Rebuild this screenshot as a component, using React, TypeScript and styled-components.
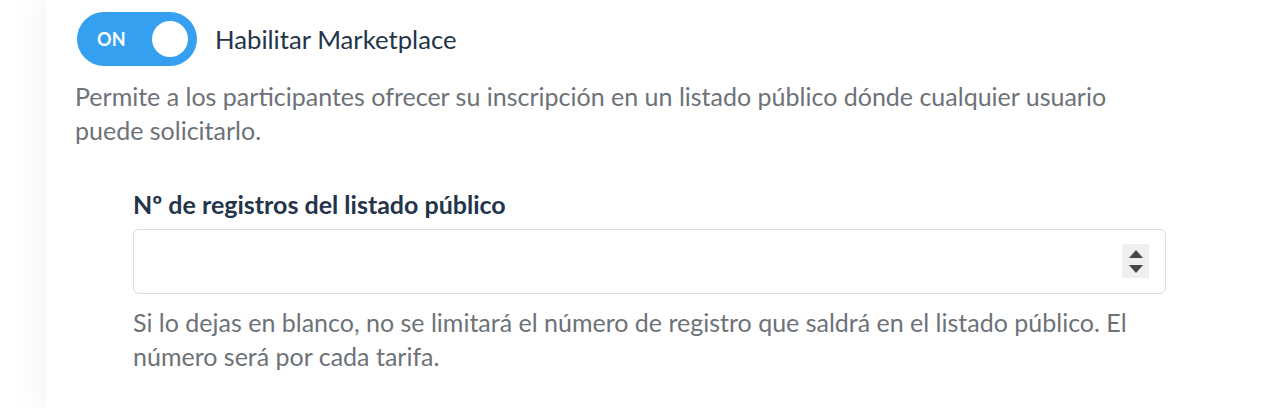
import * as React from "react";
import styled, {createGlobalStyle} from "styled-components";

const GlobalStyle = createGlobalStyle`
  html, body {
    margin: 0;
    padding: 0;
    background: #ffffff;
  }
  body {
    font-family: Lato, "Noto Sans", sans-serif;
    -webkit-font-smoothing: antialiased;
  }
`;

const Page = styled.div`
  display: flex;
  height: 408px;
  padding-left: 46px;
  overflow: hidden;
`;

const Card = styled.section`
  flex: 1;
  background: #ffffff;
  box-shadow: -12px 0 22px rgba(0, 0, 0, 0.035);
  padding: 12px 96px 0 29px;
`;

const SwitchRow = styled.label`
  display: flex;
  align-items: center;
  gap: 18px;
  padding-left: 2px;
`;

const Switch = styled.span<{ $on: boolean }>`
  display: flex;
  align-items: center;
  justify-content: space-between;
  box-sizing: border-box;
  width: 120px;
  height: 54px;
  padding: 0 9px 0 20px;
  border-radius: 27px;
  background: ${p => (p.$on ? "#359ff0" : "#c9ced4")};
`;

const SwitchText = styled.span`
  color: #ffffff;
  font-size: 18px;
  font-weight: 700;
  letter-spacing: 0.3px;
`;

const Knob = styled.span`
  width: 36px;
  height: 36px;
  border-radius: 50%;
  background: #ffffff;
`;

const SwitchLabel = styled.span`
  color: #24344a;
  font-size: 25.7px;
`;

const Hint = styled.p`
  margin: 0;
  color: #6d7278;
  font-size: 25px;
  line-height: 34px;
`;

const Description = styled(Hint)`
  margin-top: 13px;
`;

const Field = styled.div`
  margin-top: 42px;
  padding-left: 58px;
`;

const FieldLabel = styled.div`
  color: #24344a;
  font-size: 25px;
  font-weight: 700;
  line-height: 30px;
`;

const InputWrap = styled.div`
  position: relative;
  margin-top: 10px;
`;

const Input = styled.input`
  display: block;
  box-sizing: border-box;
  width: 100%;
  height: 65px;
  border: 1px solid #dcdcdc;
  border-radius: 6px;
  padding: 0 16px;
  font-family: inherit;
  font-size: 22px;
  outline: none;
`;

const Spinner = styled.span`
  position: absolute;
  right: 17px;
  top: 15px;
  width: 27px;
  height: 34px;
  background: #efefef;
  display: flex;
  flex-direction: column;
  align-items: center;
  justify-content: center;
  gap: 7px;
`;

const Arrow = styled.span<{ $down?: boolean }>`
  width: 0;
  height: 0;
  border-left: 7px solid transparent;
  border-right: 7px solid transparent;
  ${p => (p.$down ? "border-top: 8px solid #474747;" : "border-bottom: 8px solid #474747;")}
`;

const HelpText = styled(Hint)`
  margin-top: 11px;
`;

export default function App() {
  const [on, setOn] = React.useState(true);
  return (
    <>
      <GlobalStyle/>
      <Page>
        <Card>
          <SwitchRow onClick={() => setOn(!on)}>
            <Switch $on={on}>
              <SwitchText>{on ? "ON" : "OFF"}</SwitchText>
              <Knob/>
            </Switch>
            <SwitchLabel>Habilitar Marketplace</SwitchLabel>
          </SwitchRow>
          <Description>
            Permite a los participantes ofrecer su inscripción en un listado público dónde cualquier usuario puede
            solicitarlo.
          </Description>
          <Field>
            <FieldLabel>Nº de registros del listado público</FieldLabel>
            <InputWrap>
              <Input type="text" inputMode="numeric"/>
              <Spinner>
                <Arrow/>
                <Arrow $down/>
              </Spinner>
            </InputWrap>
            <HelpText>
              Si lo dejas en blanco, no se limitará el número de registro que saldrá en el listado público. El número
              será por cada tarifa.
            </HelpText>
          </Field>
        </Card>
      </Page>
    </>
  );
}
